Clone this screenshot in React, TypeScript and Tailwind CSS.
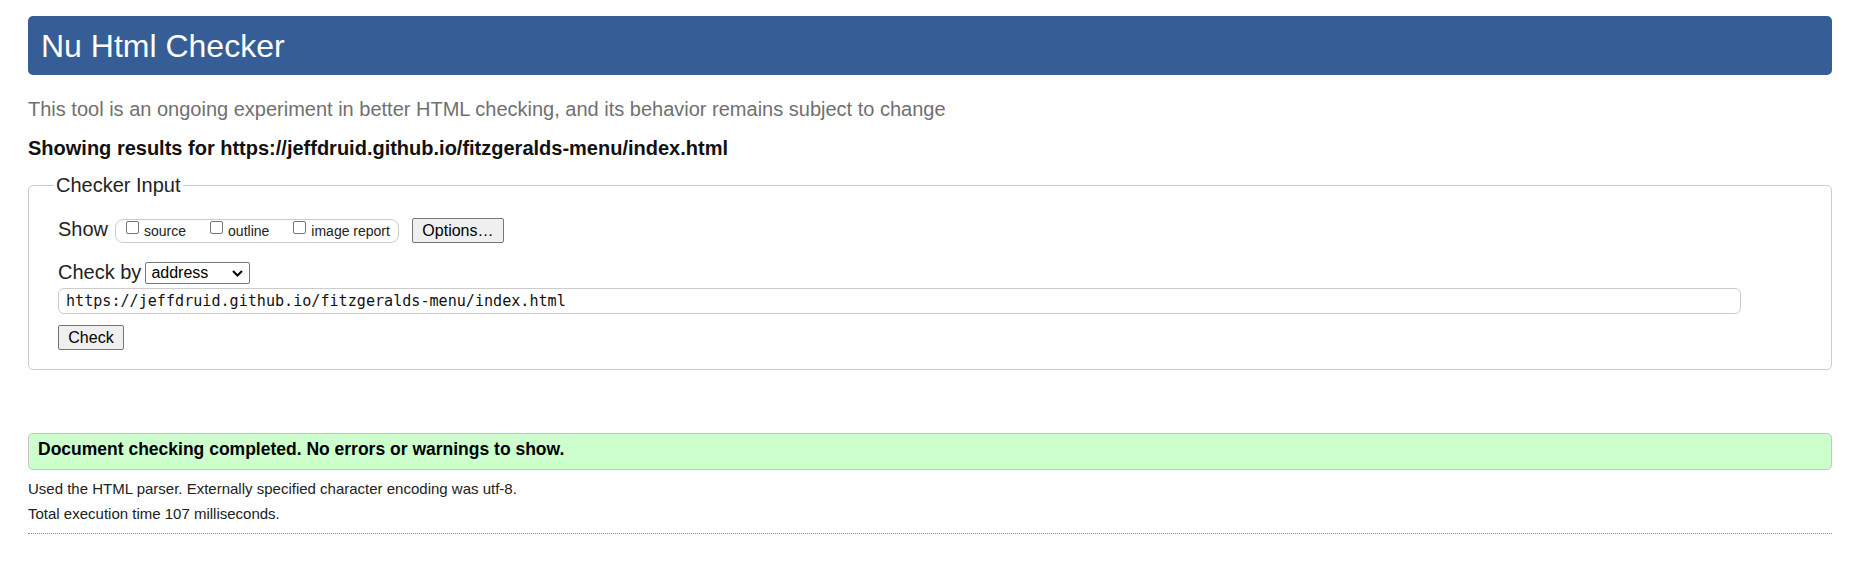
const checks = ['source', 'outline', 'image report']

export default function App() {
  return (
    <div className="min-h-[583px] bg-white pl-[28px] pr-[18px] pt-[16px] font-['Liberation_Sans',Arial,sans-serif] text-black">
      {/* Title bar */}
      <header className="rounded-[5px] bg-[#365d95] pl-[13px] pt-[14px] pb-[13px]">
        <h1 className="text-[32px] leading-[32px] text-white">Nu Html Checker</h1>
      </header>

      <p className="mt-[24px] text-[20px] leading-[20px] text-[#707070]">
        This tool is an ongoing experiment in better HTML checking, and its behavior remains subject to change
      </p>
      <h2 className="mt-[19px] text-[20px] font-bold leading-[20px] text-[#111]">
        Showing results for https://jeffdruid.github.io/fitzgeralds-menu/index.html
      </h2>

      {/* Checker input */}
      <fieldset className="mt-[17px] rounded-[5px] border border-[#cccccc] pl-[29px] pr-[90px] pt-[23px] pb-[19px]">
        <legend className="-ml-[4px] px-[2px] text-[20px] leading-[20px] text-[#222]">Checker Input</legend>

        <div className="flex h-[25px] items-center">
          <span className="pb-[4px] text-[20px] leading-[20px] text-[#222]">Show</span>
          <div className="ml-[7px] flex h-[24px] items-center gap-[24px] rounded-[8px] border border-[#cccccc] pl-[10px] pr-[8px]">
            {checks.map(c => (
              <label key={c} className="flex items-center">
                <span className="mb-[6px] h-[13px] w-[13px] rounded-[2px] border border-[#767676] bg-white" />
                <span className="ml-[5px] text-[14px] leading-[14px] text-[#222]">{c}</span>
              </label>
            ))}
          </div>
          <button className="ml-[13px] flex h-[25px] w-[92px] items-center justify-center rounded-[2px] border border-[#767676] bg-[#efefef] text-[16px] leading-[16px]">
            Options…
          </button>
        </div>

        <div className="mt-[19px] flex h-[22px] items-center">
          <span className="pb-[2px] text-[20px] leading-[20px] text-[#222]">Check by</span>
          <div className="ml-[4px] flex h-[22px] w-[105px] items-center justify-between rounded-[2px] border border-[#767676] bg-white pl-[5px] pr-[6px]">
            <span className="text-[16px] leading-[16px]">address</span>
            <svg width="11" height="7" viewBox="0 0 11 7" fill="none" stroke="#000" strokeWidth="2">
              <path d="M1 1l4.5 4.5L10 1" />
            </svg>
          </div>
        </div>

        <div className="mt-[4px] flex h-[26px] w-full items-center rounded-[6px] border border-[#cccccc] pl-[7px]">
          <span className="font-['DejaVu_Sans_Mono',monospace] text-[15.1px] leading-[15px] text-[#111]">
            https://jeffdruid.github.io/fitzgeralds-menu/index.html
          </span>
        </div>

        <button className="mt-[11px] flex h-[25px] w-[66px] items-center justify-center rounded-[2px] border border-[#767676] bg-[#efefef] text-[16px] leading-[16px]">
          Check
        </button>
      </fieldset>

      {/* Result */}
      <div className="mt-[63px] rounded-[5px] border border-[#c4c4c4] bg-[#ccffcc] pl-[9px] pt-[7px] pb-[11px]">
        <p className="text-[17.5px] font-bold leading-[17px]">Document checking completed. No errors or warnings to show.</p>
      </div>

      <p className="mt-[11px] text-[15px] leading-[15px] text-[#222]">
        Used the HTML parser. Externally specified character encoding was utf-8.
      </p>
      <p className="mt-[10px] text-[15px] leading-[15px] text-[#222]">Total execution time 107 milliseconds.</p>
      <div className="mt-[12px] border-t border-dotted border-[#888]" />
    </div>
  )
}
